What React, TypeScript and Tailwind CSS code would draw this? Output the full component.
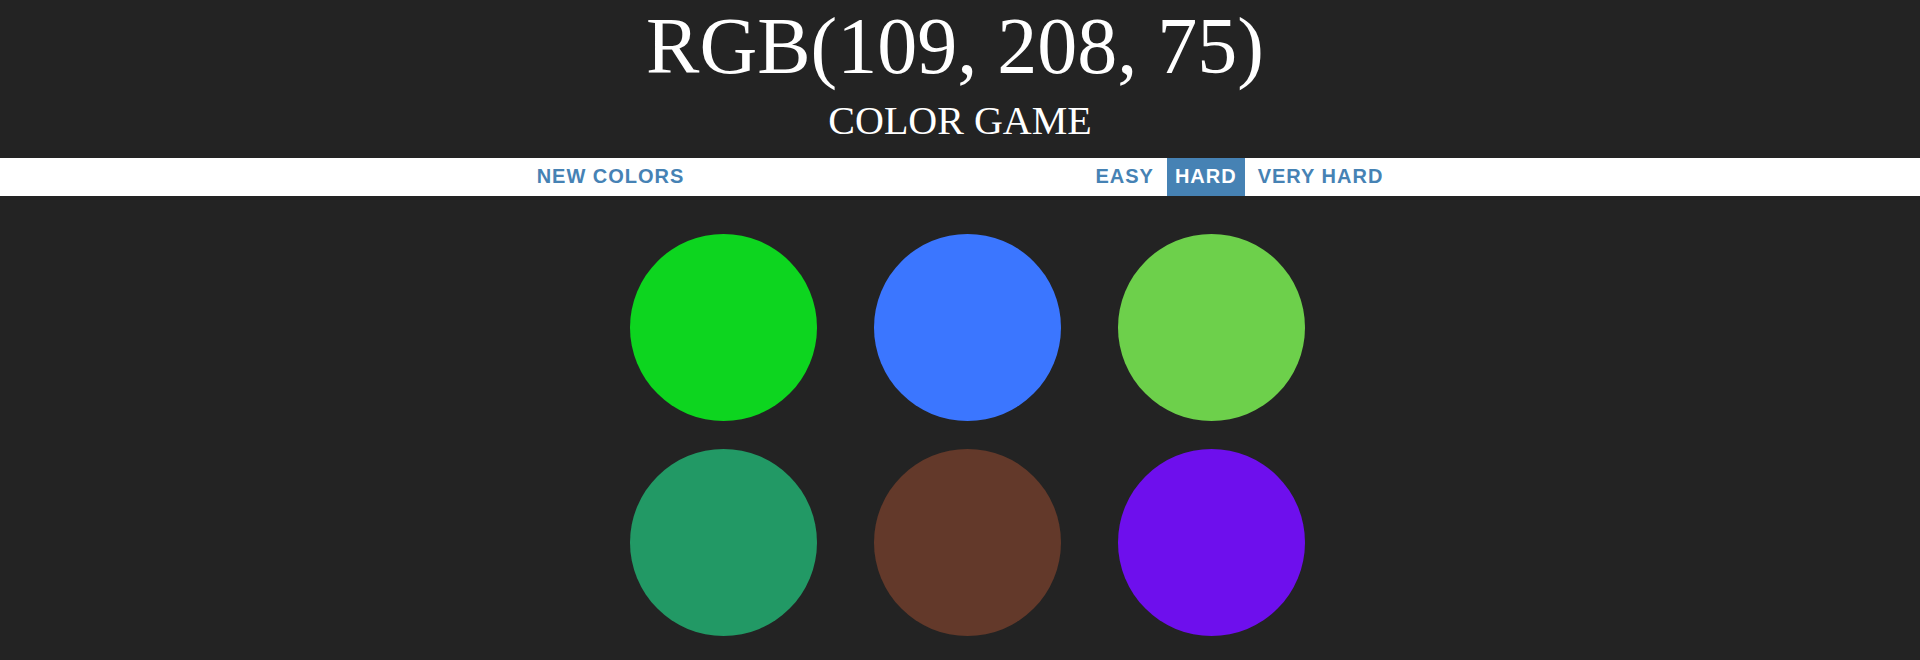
import React from "react";

const swatches = ["#0dd51f", "#3b76ff", "#6dd04b", "#229965", "#63392a", "#6e0fed"];

const levels = [
  { label: "Easy", active: false },
  { label: "Hard", active: true },
  { label: "Very Hard", active: false },
];

export default function App() {
  return (
    <div className="min-h-[660px] bg-[#232323] overflow-hidden">
      <header className="text-center text-white font-['Liberation_Serif',serif] pb-[14px]">
        <h1 className="pr-[10px] text-[80px] leading-[92px] font-normal">RGB(109, 208, 75)</h1>
        <h2 className="mt-[6px] text-[40px] leading-[46px] font-normal">COLOR GAME</h2>
      </header>

      <nav className="h-[38px] bg-white flex justify-center items-stretch gap-[5px] font-['Liberation_Sans',Arial,sans-serif] font-bold text-[20px] tracking-[1px] uppercase text-[#4682b4]">
        <button className="px-2 pb-[2px] flex items-center uppercase">New Colors</button>
        <span className="w-[385px]" />
        {levels.map((l) => (
          <button
            key={l.label}
            className={
              l.active
                ? "px-2 pb-[2px] flex items-center uppercase bg-[#4682b4] text-white"
                : "px-2 pb-[2px] flex items-center uppercase"
            }
          >
            {l.label}
          </button>
        ))}
      </nav>

      <main className="mt-[38px] flex justify-center pl-[14px]">
        <div className="grid grid-cols-[repeat(3,187px)] gap-x-[57px] gap-y-[28px]">
          {swatches.map((c) => (
            <div key={c} className="w-[187px] h-[187px] rounded-full" style={{ backgroundColor: c }} />
          ))}
        </div>
      </main>
    </div>
  );
}
